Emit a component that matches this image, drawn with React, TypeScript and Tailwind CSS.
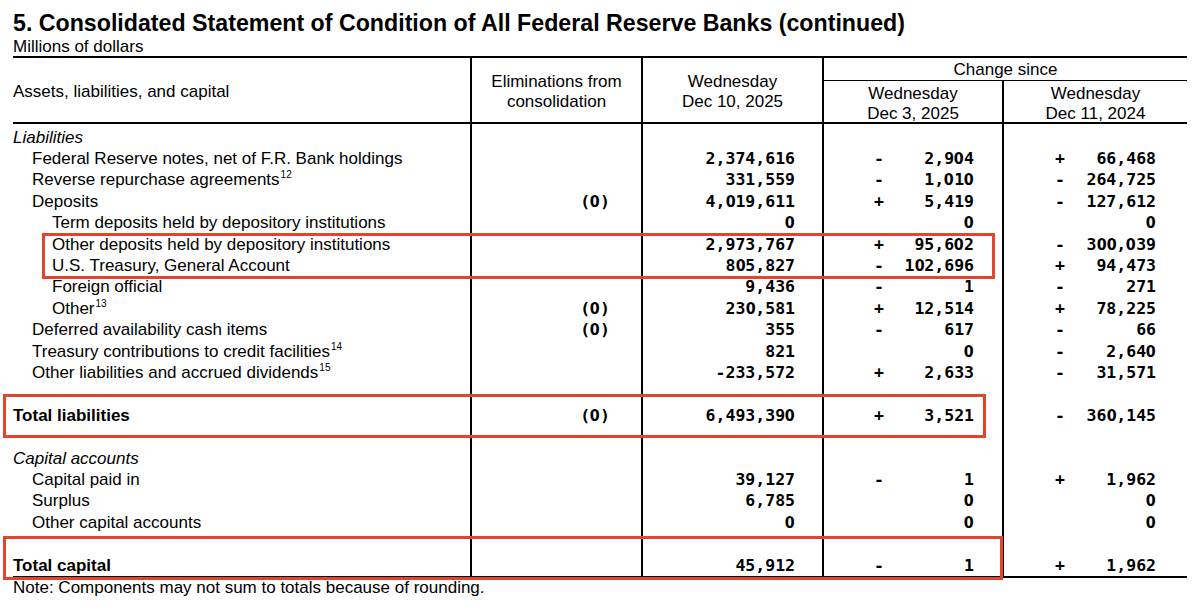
import type { ReactNode } from "react";

type Change = [sign: string, value: string];

type Row = {
  label?: string;
  sup?: string;
  indent?: 0 | 1 | 2;
  kind?: "italic" | "bold" | "blank";
  elim?: string;
  cur?: string;
  c1?: Change;
  c2?: Change;
};

const ROWS: Row[] = [
  { label: "Liabilities", kind: "italic" },
  { label: "Federal Reserve notes, net of F.R. Bank holdings", indent: 1, cur: "2,374,616", c1: ["-", "2,904"], c2: ["+", "66,468"] },
  { label: "Reverse repurchase agreements", sup: "12", indent: 1, cur: "331,559", c1: ["-", "1,010"], c2: ["-", "264,725"] },
  { label: "Deposits", indent: 1, elim: "(0)", cur: "4,019,611", c1: ["+", "5,419"], c2: ["-", "127,612"] },
  { label: "Term deposits held by depository institutions", indent: 2, cur: "0", c1: ["", "0"], c2: ["", "0"] },
  { label: "Other deposits held by depository institutions", indent: 2, cur: "2,973,767", c1: ["+", "95,602"], c2: ["-", "300,039"] },
  { label: "U.S. Treasury, General Account", indent: 2, cur: "805,827", c1: ["-", "102,696"], c2: ["+", "94,473"] },
  { label: "Foreign official", indent: 2, cur: "9,436", c1: ["-", "1"], c2: ["-", "271"] },
  { label: "Other", sup: "13", indent: 2, elim: "(0)", cur: "230,581", c1: ["+", "12,514"], c2: ["+", "78,225"] },
  { label: "Deferred availability cash items", indent: 1, elim: "(0)", cur: "355", c1: ["-", "617"], c2: ["-", "66"] },
  { label: "Treasury contributions to credit facilities", sup: "14", indent: 1, cur: "821", c1: ["", "0"], c2: ["-", "2,640"] },
  { label: "Other liabilities and accrued dividends", sup: "15", indent: 1, cur: "-233,572", c1: ["+", "2,633"], c2: ["-", "31,571"] },
  { kind: "blank" },
  { label: "Total liabilities", kind: "bold", elim: "(0)", cur: "6,493,390", c1: ["+", "3,521"], c2: ["-", "360,145"] },
  { kind: "blank" },
  { label: "Capital accounts", kind: "italic" },
  { label: "Capital paid in", indent: 1, cur: "39,127", c1: ["-", "1"], c2: ["+", "1,962"] },
  { label: "Surplus", indent: 1, cur: "6,785", c1: ["", "0"], c2: ["", "0"] },
  { label: "Other capital accounts", indent: 1, cur: "0", c1: ["", "0"], c2: ["", "0"] },
  { kind: "blank" },
  { label: "Total capital", kind: "bold", cur: "45,912", c1: ["-", "1"], c2: ["+", "1,962"] },
];

const INDENT = ["pl-0", "pl-[19px]", "pl-[39px]"];

// DejaVu Sans Mono draws a dotted zero; the report uses a plain one, so zeros come
// from DejaVu Sans squeezed to the mono advance.
function Num({ children }: { children?: string }) {
  const chars: ReactNode[] = (children ?? "").split("").map((ch, i) =>
    ch === "0" ? (
      <span key={i} className="inline-flex justify-center w-[9.93px]">
        <span className="inline-block scale-x-[0.865] [font-family:'DejaVu_Sans',sans-serif]">0</span>
      </span>
    ) : (
      <span key={i}>{ch}</span>
    ),
  );
  return (
    <span className="[font-family:'DejaVu_Sans_Mono',monospace] text-[16.5px] font-bold whitespace-pre">
      {chars}
    </span>
  );
}

function ChangeCell({ value, last }: { value?: Change; last?: boolean }) {
  return (
    <div
      className={`border-l-2 border-black flex items-center justify-between ${
        last ? "pl-[51px] pr-[31px]" : "pl-[50px] pr-[28px]"
      }`}
    >
      <Num>{value?.[0] ?? ""}</Num>
      <Num>{value?.[1] ?? ""}</Num>
    </div>
  );
}

function BodyRow({ row }: { row: Row }) {
  const labelCls =
    row.kind === "italic" ? "italic" : row.kind === "bold" ? "font-bold" : "";
  return (
    <div className="grid grid-cols-[457px_171px_181px_180px_185px] h-[21.4px]">
      <div className={`flex items-center ${INDENT[row.indent ?? 0]} ${labelCls}`}>
        {row.label}
        {row.sup ? <sup className="text-[10px] -top-[5px] ml-[1px]">{row.sup}</sup> : null}
      </div>
      <div className="border-l-2 border-black flex items-center justify-end pr-[31px]">
        <Num>{row.elim}</Num>
      </div>
      <div className="border-l-2 border-black flex items-center justify-end pr-[27px]">
        <Num>{row.cur}</Num>
      </div>
      <ChangeCell value={row.c1} />
      <ChangeCell value={row.c2} last />
    </div>
  );
}

export default function App() {
  return (
    <div className="relative w-[1200px] h-[610px] bg-white text-black overflow-hidden [font-family:'Liberation_Sans',Arial,sans-serif] text-[17px] leading-[20px]">
      <div className="pl-[13px] pt-[9px]">
        <h1 className="text-[23.2px] leading-[28px] font-bold">
          5. Consolidated Statement of Condition of All Federal Reserve Banks (continued)
        </h1>
        <div className="leading-[19px]">Millions of dollars</div>

        <div className="w-[1174px]">
          {/* header */}
          <div className="grid grid-cols-[457px_171px_181px_180px_185px] grid-rows-[23px_41px] border-t-2 border-b-2 border-black">
            <div className="row-span-2 flex items-center pt-[3px]">Assets, liabilities, and capital</div>
            <div className="row-span-2 border-l-2 border-black flex flex-col items-center justify-center text-center pt-[3px]">
              <span>Eliminations from</span>
              <span>consolidation</span>
            </div>
            <div className="row-span-2 border-l-2 border-black flex flex-col items-center justify-center text-center pt-[3px]">
              <span>Wednesday</span>
              <span>Dec 10, 2025</span>
            </div>
            <div className="col-span-2 border-l-2 border-b border-black flex items-center justify-center pt-[2px]">
              Change since
            </div>
            <div className="border-l-2 border-black flex flex-col items-center justify-center text-center pt-[4px]">
              <span>Wednesday</span>
              <span>Dec 3, 2025</span>
            </div>
            <div className="border-l-2 border-black flex flex-col items-center justify-center text-center pt-[4px]">
              <span>Wednesday</span>
              <span>Dec 11, 2024</span>
            </div>
          </div>

          {/* body */}
          <div className="border-b-2 border-black">
            <div className="grid grid-cols-[457px_171px_181px_180px_185px] h-[3px]">
              <div />
              <div className="border-l-2 border-black" />
              <div className="border-l-2 border-black" />
              <div className="border-l-2 border-black" />
              <div className="border-l-2 border-black" />
            </div>
            {ROWS.map((row, i) => (
              <BodyRow key={i} row={row} />
            ))}
          </div>
        </div>

        <div className="leading-[19px]">Note: Components may not sum to totals because of rounding.</div>
      </div>

      {/* highlight boxes drawn over the table */}
      <div className="absolute left-[42px] top-[233px] w-[953px] h-[46px] border-[3px] border-[#e2442c]" />
      <div className="absolute left-[3px] top-[394px] w-[983px] h-[44px] border-[3px] border-[#e2442c]" />
      <div className="absolute left-[3px] top-[536px] w-[1000px] h-[44px] border-[3px] border-[#e2442c]" />
    </div>
  );
}
